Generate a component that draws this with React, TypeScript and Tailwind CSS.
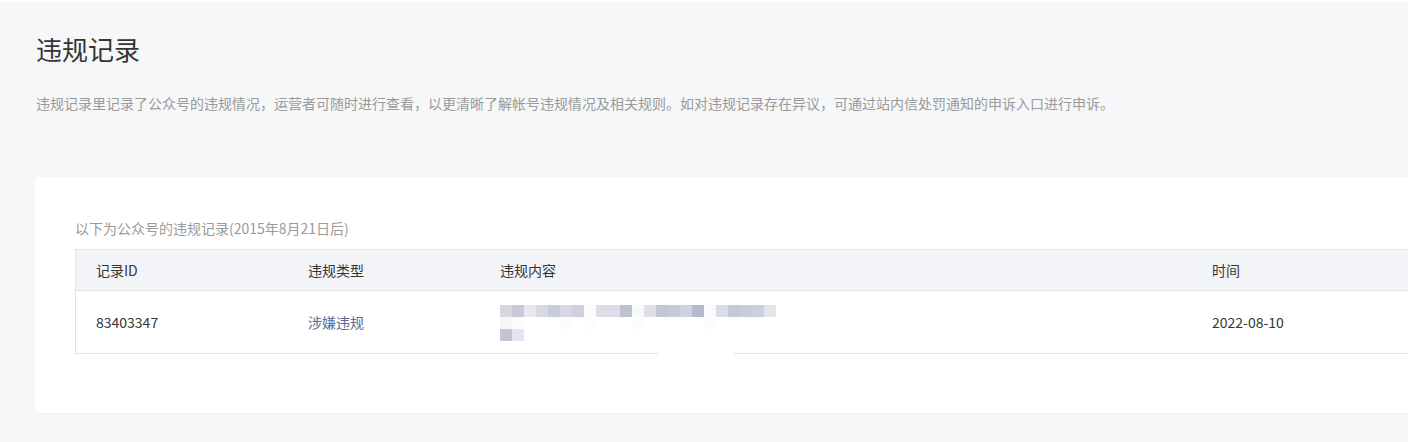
import React from "react";

const row1 = [
  "#d6d7e1", "#c9cad8", "#e8e8ee", "#d5d9e3", "#c9cbd9", "#d7d8e3", "#cdd1de", "#fbfbfc",
  "#dcdde6", "#dcdde6", "#bfc2d1", "#f8f9fb", "#dfdfe4", "#c3c6d4", "#c6c9d6", "#d0d1dc",
  "#b5b9cb", "#f9fafc", "#dcdce4", "#c5c8d6", "#cacbd9", "#ccd0dc", "#e3e5ea",
];
const row2 = [
  "#f6f6f8", "#fbfbfc", "#ffffff", "#ffffff", "#ffffff", "#fcfcfd", "#ffffff", "#fdfdfd",
  "#ffffff", "#ffffff", "#ffffff", "#fcfcfd", "#ffffff", "#ffffff", "#ffffff", "#ffffff",
  "#ffffff", "#fcfcfd", "#ffffff", "#ffffff", "#ffffff", "#ffffff", "#ffffff",
];
const row3 = ["#c1c5d3", "#e3e6ee"];

function Mosaic() {
  return (
    <div className="flex flex-col">
      {[row1, row2, row3].map((r, i) => (
        <div key={i} className="flex">
          {r.map((c, j) => (
            <div key={j} className="w-[12px] h-[12px]" style={{ backgroundColor: c }} />
          ))}
        </div>
      ))}
    </div>
  );
}

export default function App() {
  return (
    <div
      className="w-[1408px] h-[442px] overflow-hidden bg-white"
      style={{ fontFamily: '"Noto Sans CJK SC", "Noto Sans", sans-serif' }}
    >
      <div className="mt-[2px] h-[440px] bg-[#f6f7f9] pl-[35px]">
        <div className="pl-[1px] pt-[29px]">
          <h1 className="text-[26px] leading-[36px] text-[#353535] font-normal">违规记录</h1>
          <p className="mt-[25px] text-[14px] leading-[22px] text-[#9a9a9a]">
            违规记录里记录了公众号的违规情况，运营者可随时进行查看，以更清晰了解帐号违规情况及相关规则。如对违规记录存在异议，可通过站内信处罚通知的申诉入口进行申诉。
          </p>
        </div>
        <div className="mt-[63px] w-[1460px] bg-white rounded-[4px] shadow-[0_1px_3px_rgba(0,0,0,0.04)] pt-[40px] pb-[59px] pl-[40px]">
          <div className="text-[14px] leading-[22px] text-[#9a9a9a]">以下为公众号的违规记录(2015年8月21日后)</div>
          <div className="relative mt-[10px] border border-[#e4e4e7] text-[14px] text-[#353535]">
            <div className="flex h-[41px] items-center bg-[#f3f4f8] border-b border-[#e4e4e7]">
              <div className="w-[212px] pl-[20px]">记录ID</div>
              <div className="w-[192px] pl-[20px]">违规类型</div>
              <div className="w-[712px] pl-[20px]">违规内容</div>
              <div className="pl-[20px]">时间</div>
            </div>
            <div className="flex h-[62px] items-center">
              <div className="w-[212px] pl-[20px]">83403347</div>
              <div className="w-[192px] pl-[20px] text-[#5a6a91]">涉嫌违规</div>
              <div className="w-[712px] pl-[20px] pt-[2px]">
                <Mosaic />
              </div>
              <div className="pl-[20px]">2022-08-10</div>
            </div>
            <div className="absolute left-[582px] bottom-[-2px] w-[76px] h-[3px] bg-white" />
            <div className="absolute left-[452px] top-[41px] w-[256px] h-[2px] bg-white" />
          </div>
        </div>
      </div>
    </div>
  );
}
